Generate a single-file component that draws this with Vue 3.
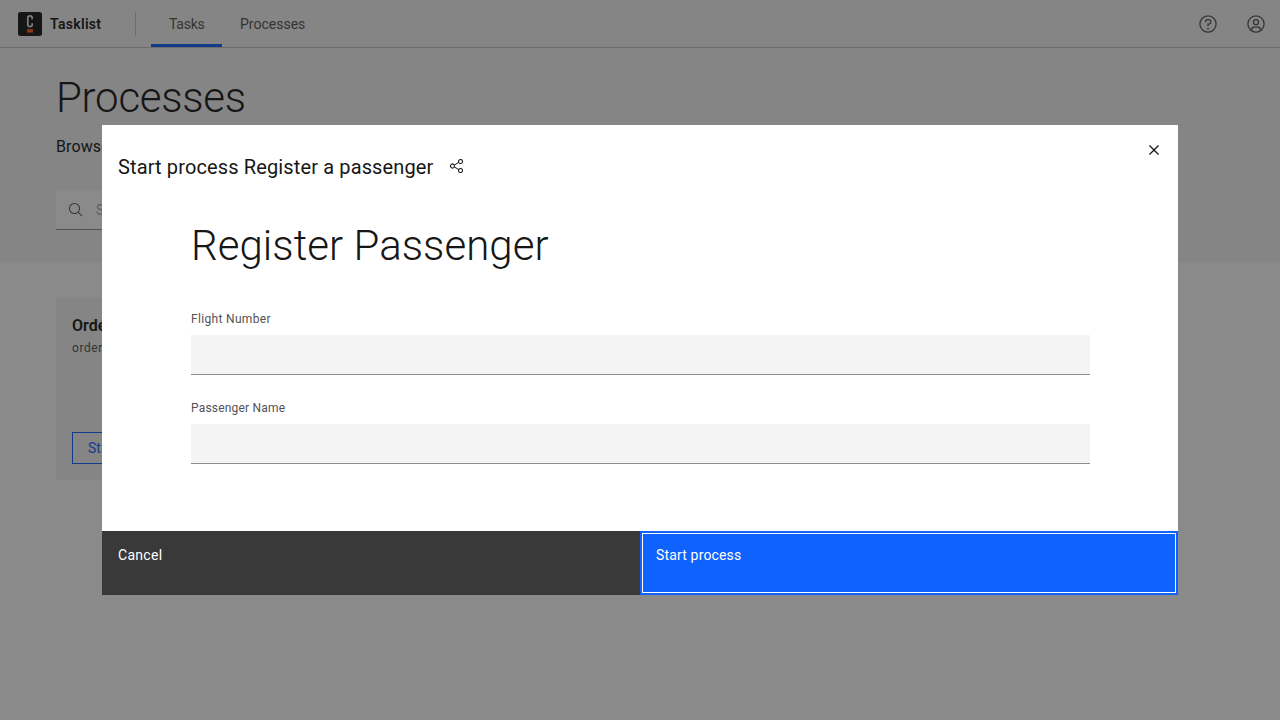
<script setup>
const fields = ['Flight Number', 'Passenger Name']
</script>

<template>
  <div class="app">
    <header class="bar">
      <svg class="logo" viewBox="0 0 24 24">
        <rect width="24" height="24" rx="2.5" fill="#161616" />
        <path d="M14.200 7.200V6a2.200 2.200 0 0 0-4.400 0v6.400a2.200 2.200 0 0 0 4.400 0v-1.200" fill="none" stroke="#e8e8e8" stroke-width="1.700" />
        <rect x="9" y="17.100" width="6" height="3.500" fill="#fc5d0d" />
      </svg>
      <span class="brand"><span class="t-brand">Tasklist</span></span>
      <span class="divider"></span>
      <nav class="nav">
        <a class="tab active"><span class="t-tasks">Tasks</span></a>
        <a class="tab"><span class="t-proc">Processes</span></a>
      </nav>
      <div class="tools">
        <svg width="20" height="20" viewBox="0 0 32 32">
          <path d="M16 2a14 14 0 1 0 14 14A14 14 0 0 0 16 2Zm0 26a12 12 0 1 1 12-12 12 12 0 0 1-12 12Z" />
          <circle cx="16" cy="23.500" r="1.500" />
          <path d="M17 8h-1.500A4.490 4.490 0 0 0 11 12.500v.5h2v-.5A2.500 2.500 0 0 1 15.500 10H17a2.500 2.500 0 0 1 0 5h-2v4.500h2V17a4.500 4.500 0 0 0 0-9Z" />
        </svg>
        <svg width="20" height="20" viewBox="0 0 32 32">
          <path d="M16 8a5 5 0 1 0 5 5 5 5 0 0 0-5-5Zm0 8a3 3 0 1 1 3-3 3 3 0 0 1-3 3Z" />
          <path d="M16 2a14 14 0 1 0 14 14A14.016 14.016 0 0 0 16 2Zm-6 24.377V25a3.003 3.003 0 0 1 3-3h6a3.003 3.003 0 0 1 3 3v1.377a11.900 11.900 0 0 1-12 0Zm13.993-1.451A5.002 5.002 0 0 0 19 20h-6a5.002 5.002 0 0 0-4.992 4.926 12 12 0 1 1 15.985 0Z" />
        </svg>
      </div>
    </header>

    <section class="hero">
      <h1 class="title"><span class="t-title">Processes</span></h1>
      <p class="intro">Browse and start processes</p>
      <div class="search">
        <svg width="16" height="16" viewBox="0 0 32 32">
          <path d="M29 27.586l-7.552-7.552a11.018 11.018 0 1 0-1.414 1.414L27.586 29ZM4 13a9 9 0 1 1 9 9 9.010 9.010 0 0 1-9-9Z" />
        </svg>
        <span>Search processes</span>
      </div>
    </section>

    <main class="content">
      <article class="card">
        <h2>Order process</h2>
        <p>orderProcess</p>
        <button>Start process</button>
      </article>
    </main>

    <div class="overlay">
      <div class="modal" role="dialog">
        <button class="close">
          <svg width="20" height="20" viewBox="0 0 32 32">
            <path d="M17.414 16 24 9.414 22.586 8 16 14.586 9.414 8 8 9.414 14.586 16 8 22.586 9.414 24 16 17.414 22.586 24 24 22.586Z" />
          </svg>
        </button>
        <div class="modal-head">
          <span class="t-head">Start process Register a passenger</span>
          <svg width="16" height="16" viewBox="0 0 32 32">
            <path d="M23 20a5 5 0 0 0-3.890 1.890L11.800 17.320a4.460 4.460 0 0 0 0-2.640l7.310-4.570A5 5 0 1 0 18 7a4.790 4.790 0 0 0 .2 1.320l-7.310 4.570a5 5 0 1 0 0 6.220l7.310 4.570A4.790 4.790 0 0 0 18 25a5 5 0 1 0 5-5ZM23 4a3 3 0 1 1-3 3 3 3 0 0 1 3-3ZM7 19a3 3 0 1 1 3-3 3 3 0 0 1-3 3Zm16 9a3 3 0 1 1 3-3 3 3 0 0 1-3 3Z" />
          </svg>
        </div>
        <form class="form">
          <h1 class="title"><span class="t-form">Register Passenger</span></h1>
          <label v-for="(f, i) in fields" :key="f" class="field">
            <span class="label" :class="'label-' + i">{{ f }}</span>
            <input type="text" />
          </label>
        </form>
        <footer class="actions">
          <button class="cancel"><span class="t-cancel">Cancel</span></button>
          <button class="start"><span class="t-start">Start process</span></button>
        </footer>
      </div>
    </div>
  </div>
</template>

<style>
html, body { margin: 0; overflow: hidden; }
</style>

<style scoped>
* { box-sizing: border-box; }
.app {
  position: relative;
  width: 1280px;
  height: 720px;
  overflow: hidden;
  background: #fff;
  color: #161616;
  font-family: Roboto, "Liberation Sans", sans-serif;
}
svg { fill: currentColor; display: block; flex: none; }
h1, h2, p { margin: 0; }
button { font-family: inherit; border: 0; border-radius: 0; text-align: left; }
.bar {
  height: 48px;
  display: flex;
  align-items: center;
  padding: 0 14px 0 18px;
  background: #f4f4f4;
  border-bottom: 1px solid #c6c6c6;
}
.logo { width: 24px; height: 24px; }
.brand { width: 85px; padding-left: 8px; font-size: 14px; font-weight: 600; white-space: nowrap; }
.t-brand { letter-spacing: 0.3px; }
.divider { width: 1px; height: 24px; margin: 0 15px 0 8px; background: #c6c6c6; }
.nav { display: flex; height: 47px; color: #525252; font-size: 14px; }
.tab { display: flex; align-items: center; padding: 4px 18px 0; border-bottom: 3px solid transparent; }
.tab.active { width: 71px; border-color: #0f62fe; }
.t-tasks { letter-spacing: -0.25px; }
.t-proc { letter-spacing: 0; }
.tools { margin-left: auto; display: flex; gap: 28px; color: #525252; }
.hero { height: 214px; padding: 25px 56px 0; background: #f4f4f4; }
.title { font-size: 42px; line-height: 50px; font-weight: 300; white-space: nowrap; }
.t-title { letter-spacing: -0.25px; }
.t-form { letter-spacing: 0.05px; }
.intro { margin-top: 12px; font-size: 16px; line-height: 24px; letter-spacing: 0.1px; }
.search {
  width: 500px;
  height: 40px;
  margin-top: 31px;
  padding: 1px 0 0 12px;
  display: flex;
  align-items: center;
  gap: 12px;
  background: #fff;
  border-bottom: 1px solid #8d8d8d;
  color: #525252;
  font-size: 14px;
}
.search span { color: #a8a8a8; }
.content { padding: 36px 56px; }
.card { width: 370px; height: 182px; padding: 16px; background: #f4f4f4; display: flex; flex-direction: column; align-items: flex-start; }
.card h2 { font-size: 16px; line-height: 24px; font-weight: 600; }
.card p { margin-top: 2px; font-size: 12px; line-height: 16px; letter-spacing: 0.6px; color: #525252; }
.card button { margin-top: auto; height: 32px; padding: 0 15px; font-size: 14px; color: #0f62fe; background: transparent; border: 1px solid #0f62fe; }
.overlay {
  position: absolute;
  inset: 0;
  display: flex;
  align-items: center;
  justify-content: center;
  background: rgba(22, 22, 22, 0.5);
}
.modal { position: relative; width: 1076px; height: 470px; display: flex; flex-direction: column; background: #fff; }
.close { position: absolute; top: 0; right: 0; width: 48px; height: 48px; padding: 15px 14px; background: transparent; color: #161616; }
.modal-head { display: flex; align-items: center; gap: 16px; padding: 28px 16px 0; font-size: 20px; line-height: 28px; }
.modal-head svg { margin-top: -2px; }
.t-head { width: 315px; white-space: nowrap; letter-spacing: 0.13px; }
.form { padding: 40px 88px 0 89px; }
.field { display: block; margin-top: 25px; }
.title + .field { margin-top: 40px; }
.label { display: block; height: 24px; font-size: 12px; line-height: 16px; color: #525252; }
.label-0 { letter-spacing: 0.33px; }
.label-1 { letter-spacing: 0.2px; }
input { display: block; width: 100%; height: 40px; padding: 0 16px; border: 0; border-bottom: 1px solid #8d8d8d; border-radius: 0; background: #f4f4f4; outline: none; }
.actions { margin-top: auto; display: flex; height: 64px; }
.actions button { flex: 1; display: flex; align-items: flex-start; padding: 15px 16px; font-size: 14px; line-height: 18px; color: #fff; }
.t-cancel { letter-spacing: 0.3px; }
.t-start { letter-spacing: 0.16px; }
.cancel { background: #393939; }
.actions .start { background: #0f62fe; border: 2px solid #0f62fe; padding: 13px 14px; box-shadow: inset 0 0 0 1px #fff; }
</style>
